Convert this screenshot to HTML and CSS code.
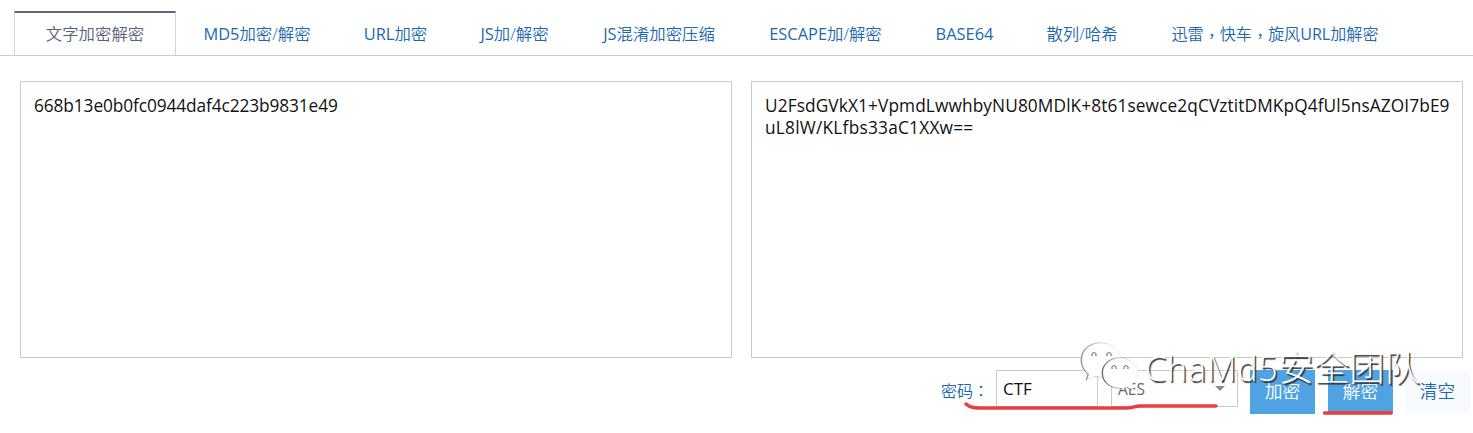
FILE: index.html
```html
<!DOCTYPE html>
<html lang="zh-CN">
<head>
<meta charset="utf-8">
<title>文字加密解密</title>
<link rel="stylesheet" href="styles.css">
</head>
<body>
<nav class="tabs">
  <a class="tab active">文字加密解密</a>
  <a class="tab"><span class="latin">MD5</span>加密/解密</a>
  <a class="tab"><span class="latin">URL</span>加密</a>
  <a class="tab"><span class="latin">JS</span>加/解密</a>
  <a class="tab"><span class="latin">JS</span>混淆加密压缩</a>
  <a class="tab"><span class="latin">ESCAPE</span>加/解密</a>
  <a class="tab"><span class="latin">BASE64</span></a>
  <a class="tab">散列/哈希</a>
  <a class="tab last">迅雷<span class="comma" lang="zh-TW">，</span>快车<span class="comma" lang="zh-TW">，</span>旋风<span class="latin">URL</span>加解密</a>
</nav>
<main class="panels">
  <div class="box plain">668b13e0b0fc0944daf4c223b9831e49</div>
  <div class="box cipher">U2FsdGVkX1+VpmdLwwhbyNU80MDlK+8t61sewce2qCVztitDMKpQ4fUl5nsAZOI7bE9<br><span class="second">uL8lW/KLfbs33aC1XXw==</span></div>
</main>
<div class="controls">
  <span class="label">密码<span class="colon" lang="zh-TW">：</span></span>
  <div class="field">CTF</div>
  <div class="select"><span>AES</span><i class="arrow"></i></div>
  <div class="btn blue">加密</div>
  <div class="btn blue">解密</div>
  <div class="btn light">清空</div>
</div>
<svg class="marks" width="1473" height="433" viewBox="0 0 1473 433">
  <path d="M966 404C970 408 976 408 984 408H1126C1134 408 1134 406 1140 406H1216"/>
  <path d="M1324.500 413H1391"/>
</svg>
<div class="watermark">
  <svg class="chat" width="60" height="52" viewBox="0 0 60 52">
    <path class="bubble" d="M21 2C10 2 2 9 2 19C2 25 5 30 9 33L7 39L15 35C18 36 21 36 24 36C34 35 41 27 41 19C41 9 32 2 21 2Z"/>
    <path class="bubble small" d="M40 17C30 17 23 24 23 32C23 41 31 47 40 47C43 47 45 47 47 46L53 49L52 43C56 40 58 37 58 32C58 24 50 17 40 17Z"/>
    <path class="eye" d="M12 15V13Q14 10 16 13V15M27 15V13Q29 10 31 13V15M32 28V26Q34 23 36 26V28M44 28V26Q46 23 48 26V28"/>
  </svg>
  <span class="brand">ChaMd5<span class="han">安全团队</span></span>
</div>
</body>
</html>
```
FILE: styles.css
```css
body {
  margin: 0;
  width: 1473px;
  height: 433px;
  position: relative;
  overflow: hidden;
  background: #fff;
  font-family: "Open Sans", "Noto Sans CJK SC", sans-serif;
}
.tabs {
  box-sizing: border-box;
  height: 56px;
  padding: 11px 0 0 14px;
  border-bottom: 1px solid #c8cbcf;
  display: grid;
  grid-template-columns: 162px 162px 115px 123px 166px 167px 111px 124px 262px;
}
.tab {
  box-sizing: border-box;
  height: 44px;
  padding-top: 2px;
  line-height: 42px;
  font-size: 16.4px;
  text-align: center;
  white-space: nowrap;
  color: #1c68b0;
  font-weight: 350;
}
.latin { font-weight: 400; }
.last { font-size: 16.100px; }
.comma, .colon { font-family: "Noto Sans CJK TC", sans-serif; line-height: 1; }
.comma {
  position: relative;
  top: 2px;
}
.active {
  padding-top: 0;
  border: 1px solid #d3d5da;
  border-top: 2px solid #5c6780;
  border-bottom: 0;
  color: #59627a;
}
.panels {
  padding: 25px 10px 0 20px;
  display: grid;
  grid-template-columns: 712px 712px;
  gap: 19px;
}
.box {
  box-sizing: border-box;
  height: 277px;
  border: 1px solid #c8cad0;
  padding: 13px;
  font-size: 17.3px;
  line-height: 22px;
  white-space: nowrap;
  color: #111;
}
.plain { letter-spacing: -0.1px; }
.cipher { letter-spacing: 0.1px; }
.second { letter-spacing: 0.23px; }
.controls {
  display: flex;
  align-items: flex-start;
  padding: 12px 0 0 941px;
  font-size: 17px;
}
.label {
  width: 55px;
  font-size: 16px;
  line-height: 42px;
  color: #1c68b0;
  font-weight: 350;
  white-space: nowrap;
}
.field {
  box-sizing: border-box;
  width: 102px;
  height: 37px;
  border: 1px solid #c8cad0;
  padding-left: 6px;
  line-height: 36px;
  font-size: 17px;
  color: #111;
}
.select {
  box-sizing: border-box;
  width: 127px;
  height: 37px;
  margin-left: 13px;
  border: 1px solid #c8cad0;
  padding: 0 12px 0 6px;
  display: flex;
  align-items: center;
  justify-content: space-between;
  font-size: 15.5px;
  color: #666b70;
}
.arrow {
  border: 5px solid transparent;
  border-top-color: #8c8c8c;
  border-bottom: 0;
}
.btn {
  width: 65px;
  height: 44px;
  margin-left: 13px;
  text-align: center;
  line-height: 43px;
  font-size: 17.7px;
  font-weight: 350;
}
.select + .btn { margin-left: 12px; }
.blue { background: #50a3e2; color: #fff; }
.light {
  background: #f7fafe;
  color: #1c68b0;
  margin-left: 12px;
}
.marks {
  position: absolute;
  left: 0;
  top: 0;
  fill: none;
  stroke: #e83e40;
  stroke-width: 3.4;
  stroke-linecap: round;
}
.watermark {
  position: absolute;
  left: 1080px;
  top: 341px;
  display: flex;
  color: #fff;
}
.chat { overflow: visible; }
.bubble {
  fill: #fff;
  stroke: #e4e4e4;
  stroke-width: 0.6;
  filter: drop-shadow(-0.5px 0.8px 0.4px #777);
}
.small { filter: drop-shadow(-0.9px 0.3px 0.4px #444); }
.eye { fill: none; stroke: #777; stroke-width: 1.2; }
.brand {
  margin-left: 5px;
  font-size: 34px;
  font-weight: 300;
  line-height: 52px;
  letter-spacing: 0.9px;
  white-space: nowrap;
  text-shadow: 1.5px 1.5px 1px #333;
}
.han { font-size: 35.400px; letter-spacing: 0; }
```
